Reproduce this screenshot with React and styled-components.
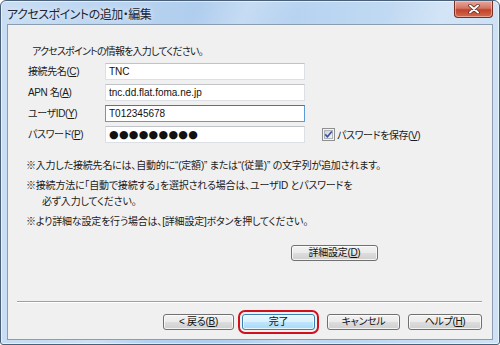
import styled, { createGlobalStyle } from 'styled-components';

const GlobalStyle = createGlobalStyle`
  html, body {
    margin: 0;
    padding: 0;
    background: #ffffff;
  }
  body {
    font-family: "Liberation Sans", "Noto Sans CJK JP", sans-serif;
    font-size: 10px;
    color: #1a1a1a;
  }
`;

const Window = styled.div`
  box-sizing: border-box;
  width: 500px;
  height: 345px;
  border: 1px solid #4a6078;
  border-radius: 6px 6px 3px 3px;
  padding: 0 6px 4px;
  display: flex;
  flex-direction: column;
  background:
    linear-gradient(115deg, rgba(255, 255, 255, 0) 30%, rgba(255, 255, 255, 0.25) 38%, rgba(255, 255, 255, 0) 46%),
    linear-gradient(115deg, rgba(255, 255, 255, 0) 60%, rgba(255, 255, 255, 0.2) 68%, rgba(255, 255, 255, 0) 76%),
    linear-gradient(to right, #c9def3, #afcdee 40%, #b9d5f1 65%, #cfe2f5);
  box-shadow: inset 0 0 0 1px rgba(255, 255, 255, 0.55);
`;

const TitleBar = styled.div`
  height: 23px;
  display: flex;
  align-items: flex-start;
  justify-content: space-between;
  flex-shrink: 0;
`;

const Title = styled.div`
  margin-top: 6px;
  font-family: "Noto Sans CJK JP", sans-serif;
  font-feature-settings: "palt";
  font-size: 12px;
  line-height: 14px;
  letter-spacing: -0.5px;
  color: #1e2530;
  text-shadow: 0 0 6px rgba(255, 255, 255, 0.9);
`;

const CloseButton = styled.div`
  width: 39px;
  height: 17px;
  box-sizing: border-box;
  border: 1px solid #7a2e22;
  border-top: none;
  border-radius: 0 0 4px 4px;
  background: linear-gradient(to bottom, #e6a89c 0%, #d47563 45%, #c1432c 55%, #d26a4e 100%);
  box-shadow: inset 0 0 0 1px rgba(255, 220, 210, 0.5);
  display: flex;
  align-items: center;
  justify-content: center;

  & > svg {
    width: 12px;
    height: 10px;
  }
`;

const Client = styled.div`
  box-sizing: border-box;
  height: 316px;
  border: 1px solid #8b9db1;
  background: #f0f0f0;
  display: flex;
  flex-direction: column;
`;

const Body = styled.div`
  flex: 1;
  padding: 19px 0 0 19px;
  font-family: "Liberation Sans", "Noto Sans CJK JP", sans-serif;
  font-feature-settings: "palt";
  font-size: 10px;
  letter-spacing: -0.4px;
`;

const Intro = styled.div`
  line-height: 16px;
  margin: 0 0 3px 5px;
  letter-spacing: -0.8px;
`;

const Form = styled.div`
  display: flex;
  flex-direction: column;
  gap: 4px;
  margin-left: 1px;
`;

const Row = styled.div`
  display: flex;
  align-items: center;
  height: 17px;
`;

const Label = styled.div`
  width: 77px;
  line-height: 16px;
`;

const Field = styled.div`
  box-sizing: border-box;
  width: 200px;
  height: 17px;
  background: #ffffff;
  border: 1px solid ${(p) => (p.focused ? '#5d9ad6' : '#dcdfe4')};
  border-top-color: ${(p) => (p.focused ? '#3d7bad' : '#c0c3c8')};
  padding: 0 3px;
  display: flex;
  align-items: center;
  font-size: 10px;
  letter-spacing: 0;
  color: #111;
`;

const Dots = styled.span`
  font-family: "DejaVu Sans", sans-serif;
  font-size: 11px;
  letter-spacing: 0.3px;
`;

const CheckWrap = styled.div`
  display: flex;
  align-items: center;
  margin-left: 17px;
  gap: 2px;

  & > svg {
    width: 13px;
    height: 13px;
  }
`;

const Notes = styled.div`
  margin: 15px 0 0 -1px;
  display: flex;
  flex-direction: column;
  gap: 4px;
  letter-spacing: -0.2px;
`;

const Note = styled.div`
  line-height: 16px;
  padding-left: 16px;
  text-indent: -16px;
`;

const DetailRow = styled.div`
  margin: 15px 0 0 264px;
`;

const Footer = styled.div`
  flex-shrink: 0;
  padding: 0 10px 9px 9px;
`;

const Separator = styled.div`
  height: 1px;
  background: #a0a0a0;
  border-bottom: 1px solid #ffffff;
  margin-bottom: 11px;
`;

const Buttons = styled.div`
  display: flex;
  justify-content: flex-end;
  gap: 8px;
`;

const Button = styled.div`
  box-sizing: border-box;
  width: ${(p) => p.w || 73}px;
  height: 16px;
  border: 1px solid ${(p) => (p.primary ? '#3c7fb1' : '#707070')};
  border-radius: 3px;
  background: ${(p) =>
    p.primary
      ? 'linear-gradient(to bottom, #eaf6fd 0%, #d9f0fc 50%, #bee6fd 51%, #a7d9f5 100%)'
      : 'linear-gradient(to bottom, #f2f2f2 0%, #ebebeb 50%, #dddddd 51%, #cfcfcf 100%)'};
  box-shadow: inset 0 0 0 1px rgba(255, 255, 255, 0.75);
  display: flex;
  align-items: center;
  justify-content: center;
  font-family: "Liberation Sans", "Noto Sans CJK JP", sans-serif;
  font-feature-settings: "palt";
  font-size: 10px;
  letter-spacing: -0.3px;
  line-height: 14px;
  color: #111;
  outline: ${(p) => (p.highlight ? '2px solid #d0101a' : 'none')};
  outline-offset: 2px;
  margin-right: ${(p) => p.mr || 0}px;
`;

const CheckBox = () => (
  <svg viewBox="0 0 13 13">
    <defs>
      <linearGradient id="cbg" x1="0" y1="0" x2="1" y2="1">
        <stop offset="0" stopColor="#cbcfd5" />
        <stop offset="1" stopColor="#f6f6f6" />
      </linearGradient>
    </defs>
    <rect x="0.5" y="0.5" width="12" height="12" fill="#f4f4f4" stroke="#8e8f8f" />
    <rect x="2.5" y="2.5" width="8" height="8" fill="url(#cbg)" stroke="#aeb3b9" />
    <path d="M3.2 6.4 L5.4 8.8 L9.8 3.4" fill="none" stroke="#3b52a0" strokeWidth="1.6" />
  </svg>
);

const CloseIcon = () => (
  <svg viewBox="0 0 12 10">
    <path d="M2 1.5 L10 8.5 M10 1.5 L2 8.5" stroke="#5a2319" strokeWidth="3.4" strokeLinecap="round" />
    <path d="M2 1.5 L10 8.5 M10 1.5 L2 8.5" stroke="#ffffff" strokeWidth="2" strokeLinecap="round" />
  </svg>
);

const App = () => (
  <>
    <GlobalStyle />
    <Window>
      <TitleBar>
        <Title>アクセスポイントの追加・編集</Title>
        <CloseButton>
          <CloseIcon />
        </CloseButton>
      </TitleBar>
      <Client>
        <Body>
          <Intro>アクセスポイントの情報を入力してください。</Intro>
          <Form>
            <Row>
              <Label>
                接続先名(<u>C</u>)
              </Label>
              <Field>TNC</Field>
            </Row>
            <Row>
              <Label>
                APN 名(<u>A</u>)
              </Label>
              <Field>tnc.dd.flat.foma.ne.jp</Field>
            </Row>
            <Row>
              <Label>
                ユーザID(<u>Y</u>)
              </Label>
              <Field focused>T012345678</Field>
            </Row>
            <Row>
              <Label>
                パスワード(<u>P</u>)
              </Label>
              <Field>
                <Dots>●●●●●●●●●</Dots>
              </Field>
              <CheckWrap>
                <CheckBox />
                <span>
                  パスワードを保存(<u>V</u>)
                </span>
              </CheckWrap>
            </Row>
          </Form>
          <Notes>
            <Note>※入力した接続先名には、自動的に“(定額)” または“(従量)” の文字列が追加されます。</Note>
            <Note>
              ※接続方法に「自動で接続する」を選択される場合は、ユーザID とパスワードを
              <br />
              必ず入力してください。
            </Note>
            <Note>※より詳細な設定を行う場合は、[詳細設定]ボタンを押してください。</Note>
          </Notes>
          <DetailRow>
            <Button w={87}>
              詳細設定(<u>D</u>)
            </Button>
          </DetailRow>
        </Body>
        <Footer>
          <Separator />
          <Buttons>
            <Button w={71}>
              &lt; 戻る(<u>B</u>)
            </Button>
            <Button w={73} primary highlight mr={4}>
              完了
            </Button>
            <Button w={73}>キャンセル</Button>
            <Button w={74}>
              ヘルプ(<u>H</u>)
            </Button>
          </Buttons>
        </Footer>
      </Client>
    </Window>
  </>
);

export default App;
